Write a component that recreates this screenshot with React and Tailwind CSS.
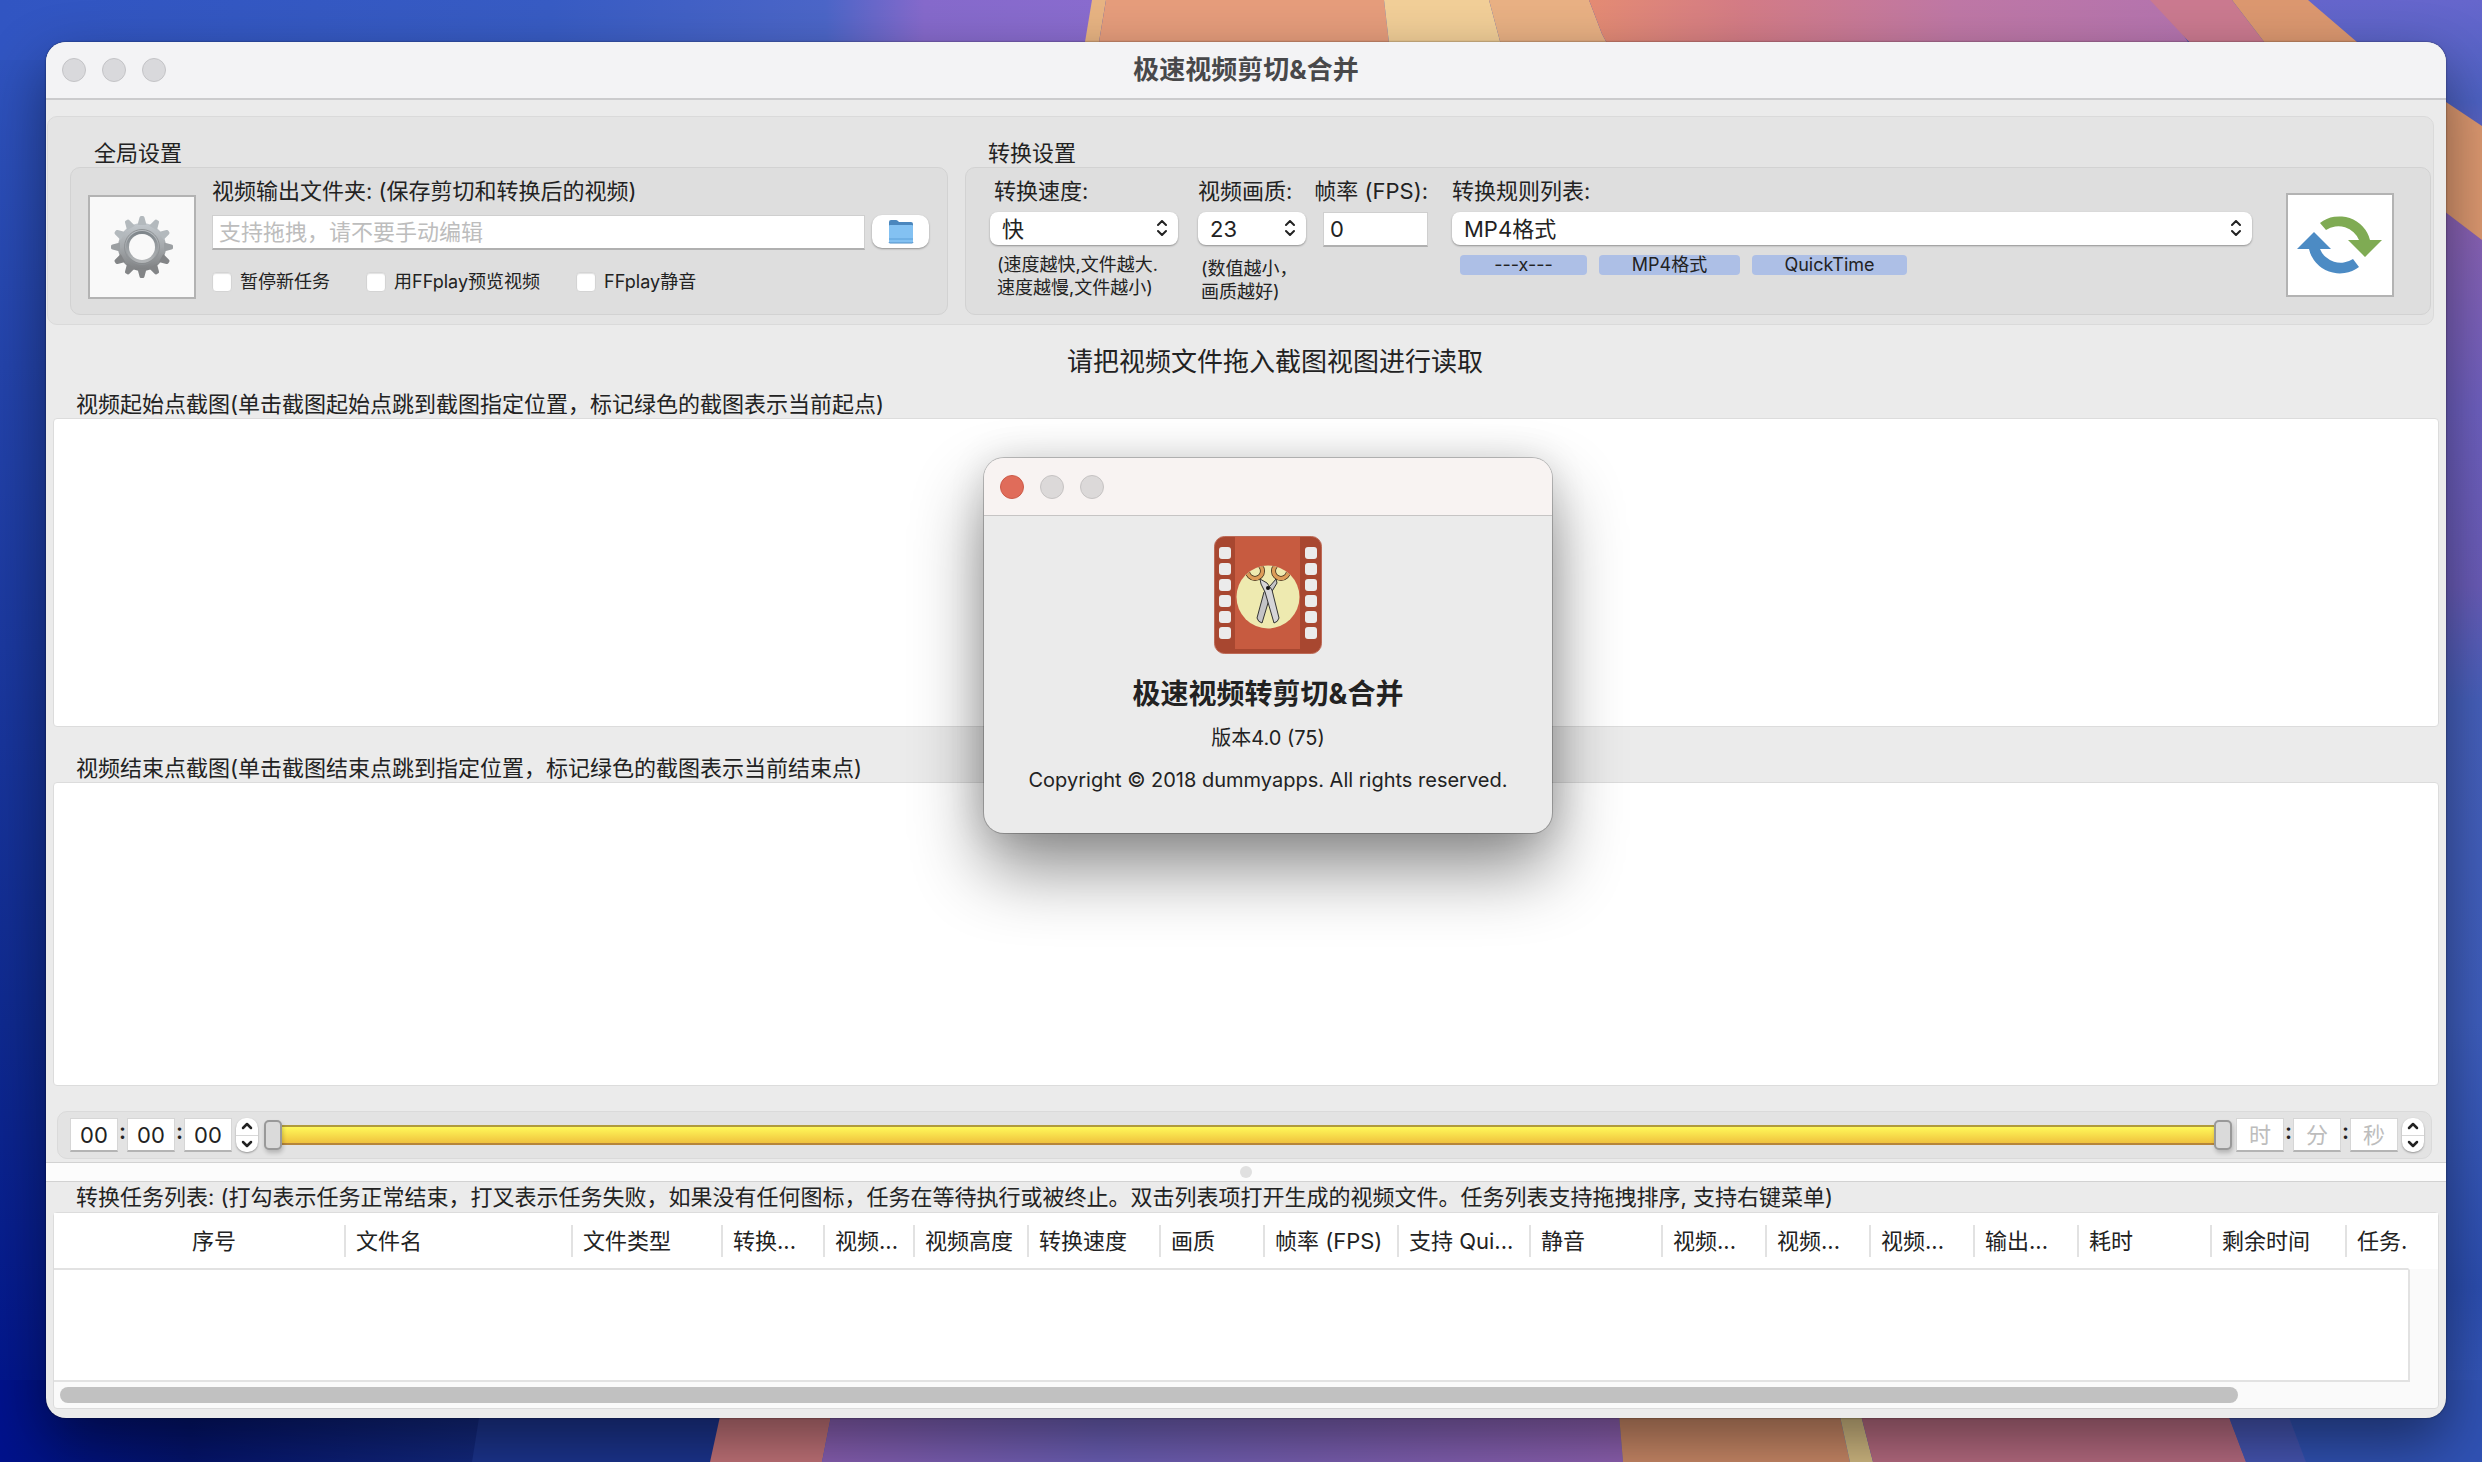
import React, { useState } from 'react';

const columns = [
  { label: '序号', width: 'w-[290px]', first: true },
  { label: '文件名', width: 'w-[227px]' },
  { label: '文件类型', width: 'w-[150px]' },
  { label: '转换...', width: 'w-[102px]' },
  { label: '视频...', width: 'w-[90px]' },
  { label: '视频高度', width: 'w-[114px]' },
  { label: '转换速度', width: 'w-[132px]' },
  { label: '画质', width: 'w-[104px]' },
  { label: '帧率 (FPS)', width: 'w-[134px]' },
  { label: '支持 Qui...', width: 'w-[132px]' },
  { label: '静音', width: 'w-[132px]' },
  { label: '视频...', width: 'w-[104px]' },
  { label: '视频...', width: 'w-[104px]' },
  { label: '视频...', width: 'w-[104px]' },
  { label: '输出...', width: 'w-[104px]' },
  { label: '耗时', width: 'w-[133px]' },
  { label: '剩余时间', width: 'w-[135px]' },
  { label: '任务.', width: '' },
];

const Wallpaper = () => (
  <svg className="absolute inset-0 h-full w-full" viewBox="0 0 2482 1462" preserveAspectRatio="none" aria-hidden="true">
    <defs>
      <linearGradient id="left" x1="0" y1="0" x2="0" y2="1">
        <stop offset="0" stopColor="#3156c2" />
        <stop offset="0.25" stopColor="#2444ac" />
        <stop offset="0.7" stopColor="#0f2a90" />
        <stop offset="1" stopColor="#00128c" />
      </linearGradient>
      <linearGradient id="top" x1="0" y1="0" x2="1" y2="0">
        <stop offset="0" stopColor="#3155c2" />
        <stop offset="0.5" stopColor="#385cc4" />
        <stop offset="0.75" stopColor="#4c66c8" />
        <stop offset="0.84" stopColor="#866acc" />
        <stop offset="1" stopColor="#8a6ccf" />
      </linearGradient>
      <linearGradient id="pink" x1="0" y1="0" x2="1" y2="0">
        <stop offset="0" stopColor="#e58c74" />
        <stop offset="0.25" stopColor="#d47c86" />
        <stop offset="0.6" stopColor="#bf78a6" />
        <stop offset="1" stopColor="#b474b0" />
      </linearGradient>
      <linearGradient id="right" x1="0" y1="0" x2="0" y2="1">
        <stop offset="0" stopColor="#6666cc" />
        <stop offset="0.07" stopColor="#4d62c4" />
        <stop offset="0.15" stopColor="#8a62b4" />
        <stop offset="0.28" stopColor="#6e60c0" />
        <stop offset="0.4" stopColor="#6a5cb8" />
        <stop offset="0.48" stopColor="#4660bc" />
        <stop offset="0.7" stopColor="#3e5ebe" />
        <stop offset="0.88" stopColor="#2c4eb0" />
        <stop offset="1" stopColor="#3a5cc0" />
      </linearGradient>
      <linearGradient id="bottomLeft" x1="0" y1="0" x2="1" y2="0">
        <stop offset="0" stopColor="#00128c" />
        <stop offset="0.25" stopColor="#04146e" />
        <stop offset="0.65" stopColor="#142a80" />
        <stop offset="1" stopColor="#1c3490" />
      </linearGradient>
      <linearGradient id="bottomMid" x1="0" y1="0" x2="1" y2="0">
        <stop offset="0" stopColor="#8a60b4" />
        <stop offset="0.35" stopColor="#6c60b8" />
        <stop offset="0.6" stopColor="#7a60b4" />
        <stop offset="1" stopColor="#9062b4" />
      </linearGradient>
    </defs>
    <rect width="2482" height="1462" fill="#3a5cc0" />
    <rect width="400" height="1462" fill="url(#left)" />
    <polygon points="0,0 1100,0 1086,60 0,60" fill="url(#top)" />
    <polygon points="1092,0 1106,0 1096,60 1082,60" fill="#e8b483" />
    <polygon points="1106,0 1384,0 1391,60 1096,60" fill="#e69d7c" />
    <polygon points="1384,0 1489,0 1505,60 1391,60" fill="#f2cf98" />
    <polygon points="1489,0 1589,0 1602,34 1616,60 1505,60" fill="#e9b184" />
    <polygon points="1589,0 2160,0 2200,60 1616,60 1602,34" fill="url(#pink)" />
    <polygon points="2150,0 2232,0 2278,60 2206,60" fill="#cb7a90" />
    <rect x="2300" width="182" height="1462" fill="url(#right)" />
    <polygon points="2232,0 2308,0 2378,60 2440,98 2482,126 2482,240 2440,208 2278,60" fill="#dc9870" />
    <rect y="1380" width="760" height="82" fill="url(#bottomLeft)" />
    <polygon points="485,1380 735,1380 712,1462 472,1462" fill="#1c3590" />
    <polygon points="728,1380 838,1380 822,1462 710,1462" fill="#c4747a" />
    <polygon points="838,1380 1616,1380 1623,1462 822,1462" fill="url(#bottomMid)" />
    <polygon points="1616,1380 1832,1380 1850,1462 1623,1462" fill="#cc8a68" />
    <polygon points="1832,1380 1852,1380 1873,1462 1850,1462" fill="#d4bc84" />
    <polygon points="1852,1380 2215,1380 2246,1462 1873,1462" fill="#b86c82" />
    <polygon points="2215,1380 2275,1380 2306,1462 2246,1462" fill="#4656b4" />
    <polygon points="2275,1380 2482,1380 2482,1462 2306,1462" fill="#3052b4" />
  </svg>
);

const GearIcon = () => (
  <svg className="h-16 w-16" viewBox="0 0 64 64" aria-hidden="true">
    <defs>
      <linearGradient id="gear" x1="0" y1="0" x2="0" y2="1">
        <stop offset="0" stopColor="#c2c8cd" />
        <stop offset="0.5" stopColor="#a4a8ab" />
        <stop offset="1" stopColor="#7d7f81" />
      </linearGradient>
      <linearGradient id="gearRing" x1="0" y1="0" x2="0" y2="1">
        <stop offset="0" stopColor="#7f868b" />
        <stop offset="1" stopColor="#b2b5b7" />
      </linearGradient>
      <mask id="gearHole">
        <rect width="64" height="64" fill="#fff" />
        <circle cx="32" cy="32" r="13" fill="#000" />
      </mask>
    </defs>
    <g mask="url(#gearHole)" fill="url(#gear)">
      <circle cx="32" cy="32" r="24" />
      {Array.from({ length: 12 }, (_, i) => (
        <path
          key={i}
          d="M27.500 10 L29.500 2.500 Q29.800 1 31 1 H33 Q34.200 1 34.500 2.500 L36.500 10 Z"
          fill={i > 3 && i < 9 ? '#838587' : i === 3 || i === 9 ? '#9b9fa2' : '#b3b9bd'}
          transform={`rotate(${i * 30} 32 32)`}
        />
      ))}
      <circle cx="32" cy="32" r="17.500" fill="none" stroke="#8f9396" />
      <circle cx="32" cy="32" r="14.500" fill="none" stroke="url(#gearRing)" strokeWidth="3" />
    </g>
  </svg>
);

const ConvertIcon = () => (
  <svg className="h-[62px] w-[88px]" viewBox="0 0 88 62" aria-hidden="true">
    <path d="M24 9 A31.500 31 0 0 1 74 26 L86 26 L69 43 L52 26 L63 26 A22 21 0 0 0 30 16 Z" fill="#7fab53" />
    <path d="M63 53 A31.500 31 0 0 1 13 35 L1 35 L18 18 L35 35 L24 35 A22 21 0 0 0 57 45 Z" fill="#4c8bc4" />
  </svg>
);

const FolderIcon = () => (
  <svg className="h-6 w-[26px]" viewBox="0 0 26 24" aria-hidden="true">
    <path d="M1 2 Q1 0 3 0 H8 Q9 0 10 1 L11 2 H23 Q25 2 25 4 V10 H1 Z" fill="#4a86bd" />
    <path d="M1 6 Q1 5 2 5 H24 Q25 5 25 6 V22 Q25 23 24 23 H2 Q1 23 1 22 Z" fill="#83c1f2" />
    <path d="M1 19 H25" stroke="#5b9fd8" />
    <path d="M1 22 Q1 23 2 23 H24 Q25 23 25 22" fill="none" stroke="#4f8fc8" />
  </svg>
);

const FilmIcon = () => (
  <svg className="h-[118px] w-[108px]" viewBox="0 0 108 118" aria-hidden="true">
    <defs>
      <clipPath id="disc">
        <circle cx="54" cy="61" r="31" />
      </clipPath>
    </defs>
    <rect x="0.500" y="0.500" width="107" height="117" rx="10" fill="#a84730" stroke="#bd6a57" />
    <rect x="21" y="1" width="65" height="112" fill="#c75b40" />
    {[11, 27, 43, 59, 75, 91].map((y) => (
      <g key={y} fill="#ebebeb">
        <rect x="5" y={y} width="12" height="12" rx="3" />
        <rect x="91" y={y} width="12" height="12" rx="3" />
      </g>
    ))}
    <circle cx="54" cy="61" r="31.500" fill="#eeeab0" />
    <g clipPath="url(#disc)">
      <g fill="none">
        <circle cx="41" cy="35" r="7.500" stroke="#3a2a18" strokeWidth="5" />
        <circle cx="41" cy="35" r="7.500" stroke="#dd9c58" strokeWidth="3.500" />
        <circle cx="67" cy="35" r="7.500" stroke="#3a2a18" strokeWidth="5" />
        <circle cx="67" cy="35" r="7.500" stroke="#dd9c58" strokeWidth="3.500" />
      </g>
      <g stroke="#333" strokeLinejoin="round">
        <path d="M62 43 L56 50 L50 56 L43 82 Q44 86 48 87 L57 57 L63 47 Z" fill="#c4c4c6" />
        <path d="M46 43 L47 48 L51 56 L60 87 Q64 86 65 82 L58 54 L53 47 Z" fill="#d5d5d8" />
      </g>
    </g>
    <circle cx="54" cy="52" r="2" fill="#111" />
  </svg>
);

const UpDown = () => (
  <svg className="pointer-events-none absolute right-[11px] top-2 h-4 w-[10px]" viewBox="0 0 10 16" fill="none" stroke="#222" strokeWidth="2" strokeLinecap="round" strokeLinejoin="round" aria-hidden="true">
    <path d="M1 5 L5 1 L9 5" />
    <path d="M1 11 L5 15 L9 11" />
  </svg>
);

const Select = ({ id, options }) => (
  <div className="relative">
    <select
      id={id}
      className="block h-[33px] w-full appearance-none rounded-lg bg-white pl-3 pr-8 text-[22px] leading-8 shadow-[0_1px_2px_rgba(0,0,0,0.35)] outline-none"
    >
      {options.map((option) => (
        <option key={option}>{option}</option>
      ))}
    </select>
    <UpDown />
  </div>
);

const Checkbox = ({ label }) => (
  <label className="flex items-center gap-2 text-[18px] leading-5">
    <input type="checkbox" className="h-5 w-5 appearance-none rounded border border-[#d4d4d4] bg-white shadow-[inset_0_1px_1px_rgba(0,0,0,0.12)]" />
    {label}
  </label>
);

const TimeInput = ({ label, ...props }) => (
  <input
    type="text"
    aria-label={label}
    className="h-[34px] w-12 border border-b-2 border-[#d6d6d6] border-b-[#b4b4b4] bg-white text-center text-[22px] leading-7 outline-none placeholder:text-[#bdbdbd]"
    {...props}
  />
);

const Colon = () => <span className="w-[9px] -translate-y-1 text-center text-[22px] font-semibold leading-7">:</span>;

const Stepper = ({ label }) => (
  <div className="ml-1 flex h-[34px] w-[22px] flex-col divide-y divide-[#d8d8d8] rounded-[10px] bg-white shadow-[0_1px_2px_rgba(0,0,0,0.35)]">
    <button type="button" aria-label={`${label} +`} className="flex flex-1 items-center justify-center">
      <svg className="h-2 w-3" viewBox="0 0 12 8" fill="none" stroke="#222" strokeWidth="2.500" strokeLinecap="round" strokeLinejoin="round">
        <path d="M2 6 L6 2 L10 6" />
      </svg>
    </button>
    <button type="button" aria-label={`${label} -`} className="flex flex-1 items-center justify-center">
      <svg className="h-2 w-3" viewBox="0 0 12 8" fill="none" stroke="#222" strokeWidth="2.500" strokeLinecap="round" strokeLinejoin="round">
        <path d="M2 2 L6 6 L10 2" />
      </svg>
    </button>
  </div>
);

const rangeClass =
  'pointer-events-none z-10 col-start-1 row-start-1 h-8 w-full appearance-none bg-transparent [&::-webkit-slider-thumb]:pointer-events-auto [&::-webkit-slider-thumb]:h-[30px] [&::-webkit-slider-thumb]:w-[18px] [&::-webkit-slider-thumb]:appearance-none [&::-webkit-slider-thumb]:rounded-[5px] [&::-webkit-slider-thumb]:border-2 [&::-webkit-slider-thumb]:border-[#999] [&::-webkit-slider-thumb]:bg-[#dadada] [&::-webkit-slider-thumb]:shadow-[1px_3px_4px_rgba(0,0,0,0.2)]';

const RangeSlider = () => {
  const [start, setStart] = useState(0);
  const [end, setEnd] = useState(100);

  return (
    <div className="grid flex-1 items-center">
      <div className="col-start-1 row-start-1 mx-1 h-5 border-y-2 border-t-[#b09a3c] border-b-[#b5853a] bg-linear-to-b from-[#fff95a] to-[#efc23e]" />
      <input type="range" aria-label="起点" className={rangeClass} value={start} onChange={(e) => setStart(Math.min(+e.target.value, end))} />
      <input type="range" aria-label="终点" className={rangeClass} value={end} onChange={(e) => setEnd(Math.max(+e.target.value, start))} />
    </div>
  );
};

const AboutDialog = () => (
  <div role="dialog" className="absolute left-[984px] top-[458px] w-[568px] overflow-hidden rounded-[20px] bg-[#ebebeb] shadow-[0_0_0_1px_rgba(0,0,0,0.22),0_36px_70px_rgba(0,0,0,0.45),0_0_36px_rgba(0,0,0,0.12)]">
    <div className="flex h-[58px] items-center gap-4 border-b border-[#c6c4c4] bg-[#f8f3f2] pl-4">
      <button type="button" aria-label="关闭" className="h-6 w-6 rounded-full border border-[#cc5a48] bg-[#e06c5a]" />
      <button type="button" aria-label="最小化" className="h-6 w-6 rounded-full border border-[#c6c3c3] bg-[#dcd9d9]" />
      <button type="button" aria-label="缩放" className="h-6 w-6 rounded-full border border-[#c6c3c3] bg-[#dcd9d9]" />
    </div>
    <div className="flex flex-col items-center pb-[39px] pt-5 text-[20px]">
      <FilmIcon />
      <h2 className="mt-5 text-[28px] font-bold leading-10">极速视频转剪切&合并</h2>
      <p className="mt-[10px] leading-7">版本4.0 (75)</p>
      <p className="mt-[14px] leading-7">Copyright © 2018 dummyapps. All rights reserved.</p>
    </div>
  </div>
);

export default function App() {
  return (
    <div className="relative flex min-h-screen bg-[#3a5cc0] pb-11 pl-[46px] pr-9 pt-[42px] font-[Inter,'Noto_Sans_CJK_SC',sans-serif] text-[22px] leading-6 text-[#222]">
      <Wallpaper />

      <main className="relative flex min-w-0 flex-1 flex-col overflow-hidden rounded-[20px] bg-[#ebebeb] shadow-[0_0_2px_rgba(0,0,0,0.6),0_24px_60px_rgba(0,0,0,0.45)]">
        {/* Title bar */}
        <header className="flex h-[58px] items-center border-b-2 border-[#cbcbcd] bg-[#f3f3f5] px-4">
          <div className="flex flex-1 gap-4">
            <button type="button" aria-label="关闭" className="h-6 w-6 rounded-full border border-[#c3c3c6] bg-[#d9d9dc]" />
            <button type="button" aria-label="最小化" className="h-6 w-6 rounded-full border border-[#c3c3c6] bg-[#d9d9dc]" />
            <button type="button" aria-label="缩放" className="h-6 w-6 rounded-full border border-[#c3c3c6] bg-[#d9d9dc]" />
          </div>
          <h1 className="text-[26px] font-bold leading-9 text-[#48484a]">极速视频剪切&合并</h1>
          <div className="flex-1" />
        </header>

        {/* Settings */}
        <section className="ml-px mr-3 mt-4 flex gap-[17px] rounded-[10px] border border-[#dadada] bg-[#e4e4e4] pb-[9px] pl-[22px] pr-[2px]">
          <div className="w-[878px]">
            <h2 className="flex h-[50px] items-end pb-[2px] pl-6">全局设置</h2>
            <div className="flex h-[148px] rounded-[10px] border border-[#d2d2d2] bg-[#dedede] pl-[17px] pr-[18px]">
              <button type="button" aria-label="设置" className="mt-[27px] flex h-[104px] w-[108px] items-center justify-center border-2 border-[#b3b3b3] bg-[#f9f9f9]">
                <GearIcon />
              </button>
              <div className="ml-4 flex-1 pt-[11px]">
                <label htmlFor="output" className="block">视频输出文件夹: (保存剪切和转换后的视频)</label>
                <div className="mt-3 flex gap-[7px]">
                  <input
                    id="output"
                    type="text"
                    placeholder="支持拖拽，请不要手动编辑"
                    className="h-[35px] min-w-0 flex-1 border border-b-2 border-[#cfcfcf] border-b-[#b0b0b0] bg-white px-[6px] text-[22px] leading-7 outline-none placeholder:text-[#bdbdbd]"
                  />
                  <button type="button" aria-label="选择文件夹" className="flex h-[33px] w-[57px] items-center justify-center rounded-[10px] bg-white shadow-[0_1px_2px_rgba(0,0,0,0.35)]">
                    <FolderIcon />
                  </button>
                </div>
                <div className="mt-[22px] flex gap-9">
                  <Checkbox label="暂停新任务" />
                  <Checkbox label="用FFplay预览视频" />
                  <Checkbox label="FFplay静音" />
                </div>
              </div>
            </div>
          </div>

          <div className="min-w-0 flex-1">
            <h2 className="flex h-[50px] items-end pb-[2px] pl-[23px]">转换设置</h2>
            <div className="flex h-[148px] rounded-[10px] border border-[#d2d2d2] bg-[#dedede] pl-6 pr-9 pt-[11px]">
              <div className="mr-5 w-[188px]">
                <label htmlFor="speed" className="mb-[9px] block pl-1">转换速度:</label>
                <Select id="speed" options={['快']} />
                <p className="mt-2 whitespace-nowrap pl-[7px] text-[18px] leading-[23px]">
                  (速度越快,文件越大.
                  <br />
                  速度越慢,文件越小)
                </p>
              </div>
              <div className="mr-[11px] w-[108px]">
                <label htmlFor="quality" className="mb-[9px] block whitespace-nowrap">视频画质:</label>
                <Select id="quality" options={['23']} />
                <p className="mt-3 whitespace-nowrap pl-[3px] text-[18px] leading-[23px]">
                  (数值越小，
                  <br />
                  画质越好)
                </p>
              </div>
              <div className="mr-6 flex w-[111px] flex-col items-end">
                <label htmlFor="fps" className="mb-[9px] whitespace-nowrap">帧率 (FPS):</label>
                <input
                  id="fps"
                  type="text"
                  defaultValue="0"
                  className="h-[35px] w-[105px] border border-b-2 border-[#cfcfcf] border-b-[#b0b0b0] bg-white px-[6px] text-[22px] leading-7 outline-none"
                />
              </div>
              <div className="min-w-0 flex-1">
                <label htmlFor="rule" className="mb-[9px] block">转换规则列表:</label>
                <Select id="rule" options={['MP4格式']} />
                <div className="mt-[10px] flex gap-3 pl-2 text-[18px] leading-5">
                  <button type="button" className="w-[127px] rounded bg-[#adbfe6]">---x---</button>
                  <button type="button" className="w-[141px] rounded bg-[#adbfe6]">MP4格式</button>
                  <button type="button" className="w-[155px] rounded bg-[#adbfe6]">QuickTime</button>
                </div>
              </div>
              <button type="button" aria-label="转换" className="ml-[34px] mt-[14px] flex h-[104px] w-[108px] items-center justify-center border-2 border-[#b3b3b3] bg-white">
                <ConvertIcon />
              </button>
            </div>
          </div>
        </section>

        <p className="mt-[19px] pl-[58px] text-center text-[26px] leading-9">请把视频文件拖入截图视图进行读取</p>

        {/* Start and end frames */}
        <h2 className="mt-3 pl-[30px]">视频起始点截图(单击截图起始点跳到截图指定位置，标记绿色的截图表示当前起点)</h2>
        <div className="ml-[7px] mr-[7px] mt-[2px] min-h-40 grow basis-[298px] rounded-[4px] border border-[#dcdcdc] bg-white" />
        <h2 className="mt-[29px] pl-[30px]">视频结束点截图(单击截图结束点跳到指定位置，标记绿色的截图表示当前结束点)</h2>
        <div className="ml-[7px] mr-[7px] mt-[2px] min-h-40 grow basis-[293px] rounded-[4px] border border-[#dcdcdc] bg-white" />

        {/* Time range */}
        <div className="ml-[11px] mr-[14px] mt-[25px] flex h-12 items-center rounded-[10px] border border-[#dadada] bg-[#e3e3e3] pl-3 pr-[7px]">
          <TimeInput label="开始时" defaultValue="00" />
          <Colon />
          <TimeInput label="开始分" defaultValue="00" />
          <Colon />
          <TimeInput label="开始秒" defaultValue="00" />
          <Stepper label="开始" />
          <div className="flex flex-1 pl-[6px] pr-1">
            <RangeSlider />
          </div>
          <TimeInput label="结束时" placeholder="时" />
          <Colon />
          <TimeInput label="结束分" placeholder="分" />
          <Colon />
          <TimeInput label="结束秒" placeholder="秒" />
          <Stepper label="结束" />
        </div>

        <div className="mt-[3px] flex h-5 items-center justify-center border-y border-[#d2d2d2] bg-[#fcfcfc]">
          <div className="h-3 w-3 rounded-full bg-[#e0e0e0]" />
        </div>

        {/* Task list */}
        <h2 className="mt-[3px] pl-[30px]">
          转换任务列表: (打勾表示任务正常结束，打叉表示任务失败，如果没有任何图标，任务在等待执行或被终止。双击列表项打开生成的视频文件。任务列表支持拖拽排序, 支持右键菜单)
        </h2>
        <div className="mb-[9px] ml-[7px] mr-[7px] mt-[3px] rounded-[4px] border border-[#dcdcdc] bg-[#fafafa]">
          <div className="flex">
            <div className="min-w-0 flex-1 border-b-2 border-r-2 border-b-[#e2e2e2] border-r-transparent bg-white">
              <table className="w-full table-fixed border-collapse">
                <thead>
                  <tr className="h-[55px]">
                    {columns.map((col, i) => (
                      <th key={i} className={`${col.width} p-0 font-normal`}>
                        <div className={col.first ? 'overflow-hidden pl-[30px] text-center leading-8' : 'overflow-hidden whitespace-nowrap border-l-2 border-[#e2e2e2] pl-[10px] text-left leading-8'}>
                          {col.label}
                        </div>
                      </th>
                    ))}
                  </tr>
                </thead>
              </table>
            </div>
            <div className="h-14 w-7 bg-white" />
          </div>
          <div className="mr-7 h-28 border-b-2 border-r-2 border-[#e2e2e2] bg-white" />
          <div className="px-[6px] py-[5px]">
            <div className="mr-[194px] h-4 rounded-full bg-[#c1c1c1]" />
          </div>
        </div>
      </main>

      <AboutDialog />
    </div>
  );
}
